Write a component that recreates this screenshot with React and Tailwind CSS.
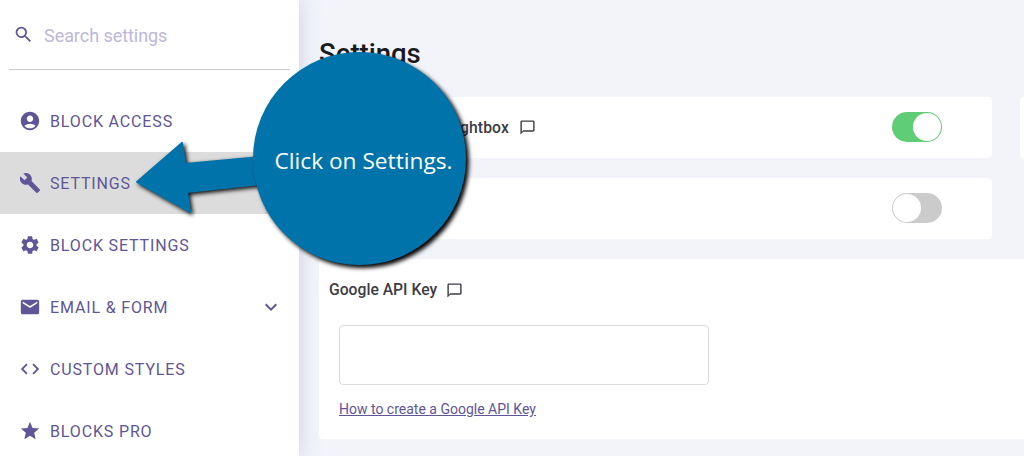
import { MdAccountCircle, MdBuild, MdSettings, MdEmail, MdCode, MdStar, MdSearch, MdExpandMore, MdChatBubbleOutline } from 'react-icons/md';

const menuItems = [
  { label: 'Block Access', icon: MdAccountCircle },
  { label: 'Settings', icon: MdBuild, active: true },
  { label: 'Block Settings', icon: MdSettings },
  { label: 'Email & Form', icon: MdEmail, hasChevron: true },
  { label: 'Custom Styles', icon: MdCode },
  { label: 'Blocks Pro', icon: MdStar },
];

const Toggle = ({ on }) => (
  <div className={`-mt-[1px] flex h-[30px] w-[50px] rounded-full p-[1px] ${on ? 'justify-end bg-[#5fcd75]' : 'justify-start bg-[#cbcbcb]'}`}>
    <div className="h-[28px] w-[28px] rounded-full bg-white" />
  </div>
);

const App = () => {
  return (
    <div className="relative flex h-[456px] w-[1024px] overflow-hidden bg-[#f2f4fa] font-['Roboto',sans-serif]">
      {/* Sidebar */}
      <aside className="z-10 h-full w-[299px] shrink-0 bg-white shadow-[2px_0_18px_rgba(150,155,190,0.35)]">
        <div className="flex h-[69px] items-center pl-[13px] text-[#5f5597]">
          <MdSearch size={21} />
          <span className="ml-[10px] mt-[2px] text-[18px] tracking-[-0.05px] text-[#bdb7d9]">Search settings</span>
        </div>
        <div className="mx-[9px] h-px bg-[#cccccc]" />
        <nav className="mt-[20px]">
          {menuItems.map((item) => {
            const Icon = item.icon;
            return (
              <div
                key={item.label}
                className={`flex h-[62px] items-center pl-[19px] pr-[16px] text-[#5f5597] ${item.active ? 'bg-[#dcdcdc]' : ''}`}
              >
                <Icon size={22} className="shrink-0" />
                <span className="ml-[9px] mt-[2px] text-[16px] uppercase tracking-[0.85px]">{item.label}</span>
                {item.hasChevron && <MdExpandMore size={24} className="ml-auto" />}
              </div>
            );
          })}
        </nav>
      </aside>

      {/* Main content */}
      <main className="flex-1 pl-[20px] text-[#3c3c46]">
        <h1 className="mt-[37px] h-[33px] text-[27.5px] font-medium leading-[33px] text-[#1a1a1f]">Settings</h1>
        <div className="mt-[27px] flex w-[780px] gap-[28px]">
          <div className="flex h-[61px] w-[673px] shrink-0 items-center justify-between rounded-[4px] bg-white pl-[10px] pr-[50px]">
            <div className="flex items-center gap-[10px] text-[15.7px] font-medium">
              <span className="tracking-[0.1px]">Enable Galleries Lightbox</span>
              <MdChatBubbleOutline size={17} />
            </div>
            <Toggle on />
          </div>
          <div className="h-[61px] w-[100px] shrink-0 rounded-[4px] bg-white" />
        </div>
        <div className="mt-[20px] flex h-[61px] w-[673px] items-center justify-end rounded-[4px] bg-white pr-[50px]">
          <Toggle />
        </div>
        <div className="mt-[20px] h-[180px] w-[760px] rounded-[4px] bg-white pl-[10px] pt-[21px]">
          <div className="flex h-[20px] items-center gap-[9px] text-[15.7px] font-medium">
            <span>Google API Key</span>
            <MdChatBubbleOutline size={17} />
          </div>
          <div className="ml-[10px] mt-[25px] h-[60px] w-[370px] rounded-[4px] border border-[#dcdcdc] bg-white" />
          <a className="ml-[10px] mt-[15px] block text-[14px] leading-[18px] text-[#5f5597] underline">How to create a Google API Key</a>
        </div>
      </main>

      {/* Callout pointing at the Settings row */}
      <svg className="absolute left-[130px] top-[135px] z-20 overflow-visible" width="140" height="90" viewBox="130 135 140 90">
        <polygon
          points="137,182 182,143 185,164 262,157 262,184 187,192 190,212"
          fill="#0073aa"
          stroke="#0073aa"
          strokeWidth="2"
          strokeLinejoin="round"
          style={{ filter: 'drop-shadow(2px 2px 2px rgba(0,0,0,0.95))' }}
        />
      </svg>
      <div className="absolute left-[253px] top-[52px] z-20 flex h-[213px] w-[213px] items-center justify-center rounded-full bg-[#0073aa] pl-[8px] pt-[5px] font-['Open_Sans',sans-serif] text-[22.7px] text-white shadow-[3px_3px_4px_#000]">
        <span className="whitespace-nowrap">Click on Settings.</span>
      </div>
    </div>
  );
};

export default App;
